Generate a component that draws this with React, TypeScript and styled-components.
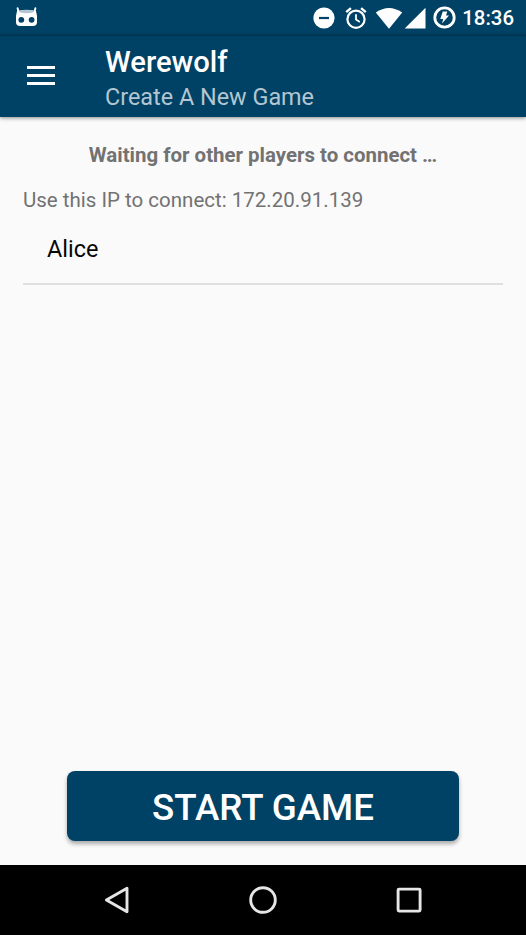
import React from "react";
import styled, { createGlobalStyle } from "styled-components";

const GlobalStyle = createGlobalStyle`
  *, *::before, *::after { box-sizing: border-box; }
  body { margin: 0; background: #fafafa; font-family: Roboto, "Liberation Sans", sans-serif; }
`;

const Screen = styled.div`
  display: flex;
  flex-direction: column;
  width: 526px;
  height: 935px;
  background: #fafafa;
  overflow: hidden;
`;

const StatusBar = styled.header`
  flex: none;
  display: flex;
  align-items: center;
  justify-content: space-between;
  height: 35px;
  padding: 0 12px 0 15px;
  background: #004265;
  color: #fff;
`;

const StatusIcons = styled.div`
  display: flex;
  align-items: center;
`;

const Glyph = styled.svg<{ $gap?: number }>`
  display: block;
  flex: none;
  margin-right: ${(p) => p.$gap ?? 0}px;
`;

const Clock = styled.time`
  font-size: 20.4px;
  font-weight: 500;
  line-height: 35px;
  padding-top: 1px;
`;

const AppBar = styled.div`
  flex: none;
  display: flex;
  align-items: flex-start;
  height: 82px;
  padding: 10px 0 0 27px;
  background: #004265;
  box-shadow: 0 1px 4px rgba(0, 0, 0, 0.45), inset 0 1px 1px rgba(0, 0, 0, 0.25);
`;

const MenuButton = styled.button`
  display: block;
  width: 28px;
  margin: 20px 50px 0 0;
  padding: 0;
  border: 0;
  background: none;
`;

const Titles = styled.div`
  display: flex;
  flex-direction: column;
  gap: 4px;
  white-space: nowrap;
`;

const Title = styled.h1`
  margin: 0;
  font-size: 29.2px;
  font-weight: 500;
  line-height: 34px;
  color: #fff;
`;

const Subtitle = styled.div`
  font-size: 23.4px;
  line-height: 28px;
  color: #b3c6d1;
`;

const Content = styled.main`
  flex: 1;
  display: flex;
  flex-direction: column;
  padding: 26px 23px 24px;
  white-space: nowrap;
`;

const Waiting = styled.div`
  font-size: 20.45px;
  font-weight: 700;
  line-height: 24px;
  text-align: center;
  color: #727272;
`;

const Address = styled.div`
  margin-top: 21px;
  font-size: 20.5px;
  line-height: 24px;
  color: #727272;
`;

const Players = styled.ul`
  flex: 1;
  margin: 15px 0 0;
  padding: 0;
  list-style: none;
`;

const Player = styled.li`
  height: 58px;
  padding: 8px 24px 0;
  border-bottom: 2px solid #dfdfdf;
  font-size: 23.4px;
  line-height: 28px;
  color: #080808;
`;

const StartButton = styled.button`
  align-self: center;
  width: 392px;
  height: 70px;
  padding: 3px 0 0;
  border: 0;
  border-radius: 8px;
  background: #004265;
  box-shadow: 0 3px 4px rgba(0, 0, 0, 0.32);
  font-family: inherit;
  font-size: 36.7px;
  font-weight: 500;
  line-height: 44px;
  color: #fff;
`;

const NavBar = styled.nav`
  flex: none;
  display: flex;
  align-items: center;
  justify-content: center;
  gap: 118px;
  height: 70px;
  background: #000;
`;

const NavButton = styled.button`
  width: 28px;
  height: 28px;
  padding: 0;
  border: 0;
  background: none;
`;

const NAV_SHAPES = [
  { label: "Back", shape: <path d="M3.4 14 L24 2.2 V25.8 Z" /> },
  { label: "Home", shape: <circle cx="14" cy="14" r="12.3" /> },
  { label: "Recents", shape: <rect x="3.1" y="3.1" width="22" height="22" rx="1" /> },
];

export default function App() {
  return (
    <>
      <GlobalStyle />
      <Screen>
        <StatusBar>
          <Glyph width="23" height="21" viewBox="0 0 23 21" fill="#fff">
            <path d="M2.600 1.200 3.400 4.800M20.400 1.200 19.600 4.800" stroke="#fff" strokeWidth="1.900" strokeLinecap="round" />
            <path d="M2 4Q11.500 2 21 4L22 9V15Q22 18.900 18 18.900H5Q1 18.900 1 15V9Z" />
            <path d="M4 3.500Q11.500 2 19 3.500L18.400 5.300Q11.500 7.300 4.600 5.300Z" fill="#b3c6d1" />
            <circle cx="6.300" cy="12.800" r="2.900" fill="#004265" />
            <circle cx="16.600" cy="12.800" r="2.900" fill="#004265" />
          </Glyph>
          <StatusIcons>
            <Glyph $gap={10} width="22" height="22" viewBox="0 0 22 22">
              <circle cx="11" cy="11" r="10.600" fill="#fff" />
              <path d="M6 11H16" stroke="#004265" strokeWidth="2.200" />
            </Glyph>
            <Glyph $gap={8} width="22" height="22" viewBox="0 0 22 22" fill="none" stroke="#fff">
              <circle cx="11" cy="12.200" r="8.600" strokeWidth="2.200" />
              <path d="M11 7.200V12.500L14.800 14.900" strokeWidth="1.800" />
              <path d="M1.200 5.100 5.900 1.100M20.800 5.100 16.100 1.100" strokeWidth="2.400" />
            </Glyph>
            <Glyph $gap={1} width="28" height="22" viewBox="0 0 28 22" fill="#fff">
              <path d="M.8 5.500Q14-3.700 27.200 5.500L14 21.700Z" />
            </Glyph>
            <Glyph $gap={7} width="22" height="22" viewBox="0 0 22 22" fill="#fff">
              <path d="M.7 21.600 21.500.8V21.600Z" />
            </Glyph>
            <Glyph $gap={6} width="23" height="23" viewBox="0 0 23 23">
              <circle cx="11.500" cy="11.500" r="9.700" fill="none" stroke="#fff" strokeWidth="2.800" />
              <path d="M9.800 5.600H14.300L13 9.600H16L9 17.600 10.200 12.900H7.300Z" fill="#fff" />
            </Glyph>
            <Clock>18:36</Clock>
          </StatusIcons>
        </StatusBar>

        <AppBar>
          <MenuButton aria-label="Menu">
            <Glyph width="28" height="21" viewBox="0 0 28 21" fill="#fff">
              <path d="M0 1H28V4H0ZM0 9H28V12H0ZM0 17H28V20H0Z" />
            </Glyph>
          </MenuButton>
          <Titles>
            <Title>Werewolf</Title>
            <Subtitle>Create A New Game</Subtitle>
          </Titles>
        </AppBar>

        <Content>
          <Waiting>Waiting for other players to connect …</Waiting>
          <Address>Use this IP to connect: 172.20.91.139</Address>
          <Players>
            <Player>Alice</Player>
          </Players>
          <StartButton>START GAME</StartButton>
        </Content>

        <NavBar>
          {NAV_SHAPES.map(({ label, shape }) => (
            <NavButton key={label} aria-label={label}>
              <Glyph
                width="28"
                height="28"
                viewBox="0 0 28 28"
                fill="none"
                stroke="#e6e6e6"
                strokeWidth="2.900"
                strokeLinejoin="round"
              >
                {shape}
              </Glyph>
            </NavButton>
          ))}
        </NavBar>
      </Screen>
    </>
  );
}
